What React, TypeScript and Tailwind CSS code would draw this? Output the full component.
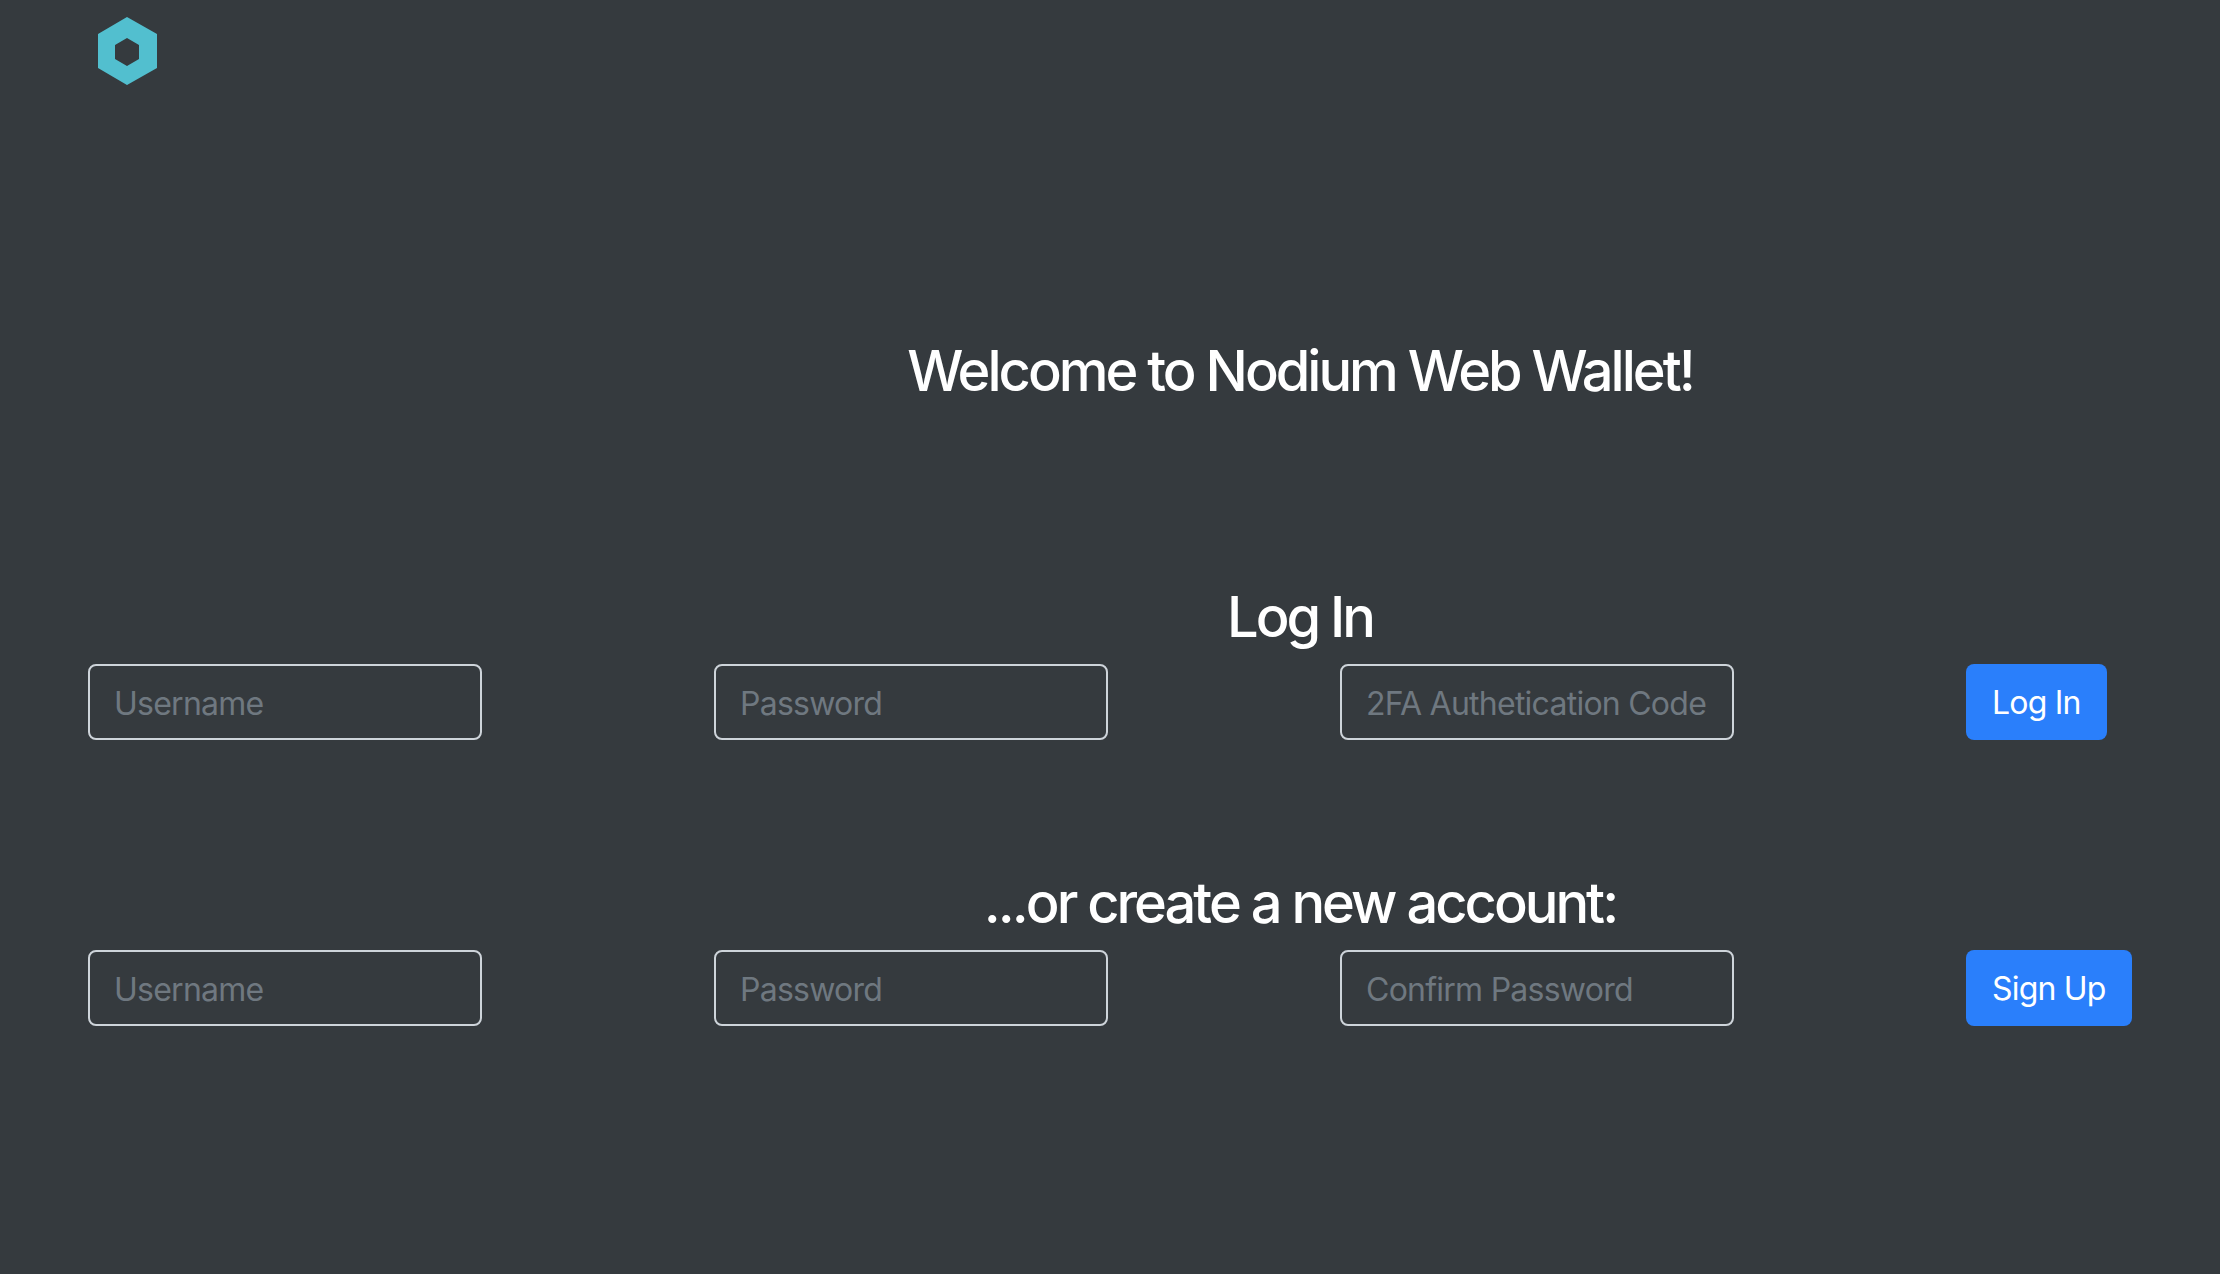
const AuthRow = ({ fields, action }: { fields: string[]; action: string }) => {
  return (
    <div className="flex justify-between px-[88px]">
      {fields.map((field) => (
        <input
          key={field}
          type={field.includes("Password") ? "password" : "text"}
          placeholder={field}
          className="w-[394px] h-[76px] px-[24px] pt-[2px] bg-transparent border-2 border-[#ced4da] rounded-[8px] text-[32px] tracking-[-0.75px] text-white placeholder:text-[#6f7880] outline-none"
        />
      ))}
      <div className="w-[166px]">
        <button className="h-[76px] px-[26px] pt-[2px] bg-[#2a7ffb] rounded-[8px] text-[32px] tracking-[-0.8px] text-white whitespace-nowrap">
          {action}
        </button>
      </div>
    </div>
  );
};

const Heading = ({ children, className }: { children: string; className: string }) => (
  <h2 className={`pl-[380px] text-center text-[56px] leading-[67px] font-medium tracking-[-3px] text-white ${className}`}>
    {children}
  </h2>
);

export default function App() {
  return (
    <div className="min-h-[1274px] bg-[#353a3e] font-['Inter',sans-serif]">
      <nav className="pl-[97px] pt-[17px]">
        <svg width="60" height="68" viewBox="0 0 60 68" className="block">
          <path
            fill="#52bfcf"
            fillRule="evenodd"
            d="M30 0L60 17V51L30 68L1 51V17ZM30 21L18 28V42L30 49L42 42V28Z"
          />
        </svg>
      </nav>
      <Heading className="pt-[253px]">Welcome to Nodium Web Wallet!</Heading>
      <Heading className="pt-[179px] pb-[13px]">Log In</Heading>
      <AuthRow fields={["Username", "Password", "2FA Authetication Code"]} action="Log In" />
      <Heading className="pt-[130px] pb-[13px]">...or create a new account:</Heading>
      <AuthRow fields={["Username", "Password", "Confirm Password"]} action="Sign Up" />
    </div>
  );
}
